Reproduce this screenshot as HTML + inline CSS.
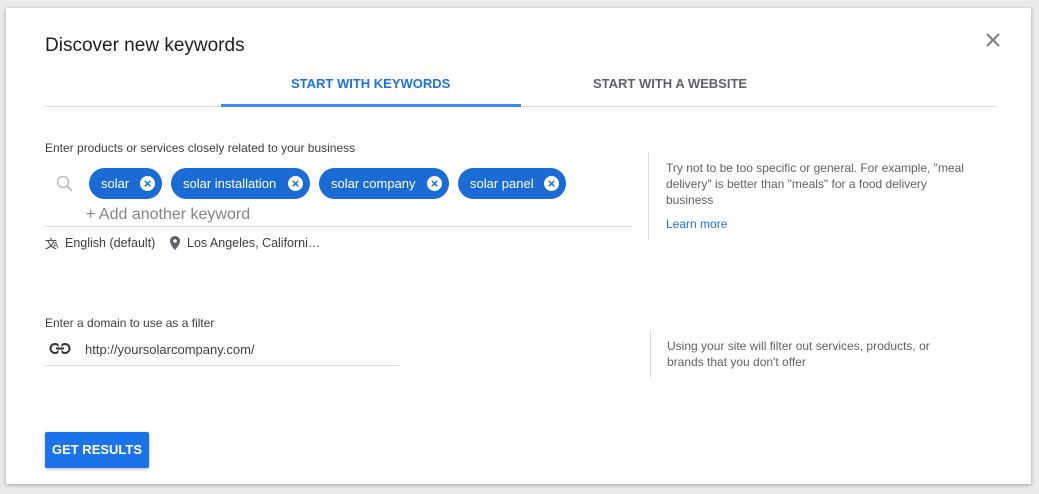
<!DOCTYPE html><html><head><style>
body{margin:0;width:1039px;height:494px;background:#e9eaeb;font-family:"Liberation Sans",Arial,sans-serif;position:relative;overflow:hidden}
.card{position:absolute;left:6px;top:8px;width:1025px;height:476px;background:#fff;box-shadow:0 1px 4px rgba(0,0,0,.3)}
.a{position:absolute;white-space:nowrap}
.chip{position:absolute;top:168px;height:31px;border-radius:16px;background:#1a6bd6;color:#fff;font-size:13px;line-height:31px;padding-left:12px;box-sizing:border-box}
.chip i{position:absolute;right:7px;top:8px;width:15px;height:15px;border-radius:50%;background:#fff;color:#1a6bd6;font-style:normal;font-size:13px;line-height:15px;text-align:center;font-weight:bold}
.s{font-size:12px;color:#3c4043}
</style></head><body><div class="card"></div>
<div class="a" style="left:45px;top:35px;font-size:19px;color:#202124">Discover new keywords</div>
<svg class="a" style="left:985px;top:32px" width="16" height="16"><path d="M2 2L14 14M14 2L2 14" stroke="#808080" stroke-width="2"/></svg>
<div class="a" style="left:291px;top:76px;font-size:13px;font-weight:bold;color:#1a73e8">START WITH KEYWORDS</div>
<div class="a" style="left:593px;top:76px;font-size:13px;font-weight:bold;color:#5f6368">START WITH A WEBSITE</div>
<div class="a" style="left:45px;top:106px;width:952px;height:1px;background:#dadce0"></div>
<div class="a" style="left:221px;top:104px;width:300px;height:3px;background:#4285f4"></div>
<div class="a s" style="left:45px;top:141px">Enter products or services closely related to your business</div>
<svg class="a" style="left:55px;top:174px" width="20" height="20"><circle cx="8" cy="8" r="5.5" fill="none" stroke="#bbb" stroke-width="1.5"/><line x1="12" y1="12" x2="17" y2="17" stroke="#bbb" stroke-width="1.8"/></svg>
<div class="chip" style="left:89px;width:73px">solar<i>×</i></div>
<div class="chip" style="left:171px;width:139px">solar installation<i>×</i></div>
<div class="chip" style="left:319px;width:130px">solar company<i>×</i></div>
<div class="chip" style="left:458px;width:108px">solar panel<i>×</i></div>
<div class="a" style="left:86px;top:206px;font-size:16px;color:#80868b">+ Add another keyword</div>
<div class="a" style="left:45px;top:226px;width:587px;height:1px;background:#dadce0"></div>
<div class="a s" style="left:45px;top:235px;font-size:12px">文</div>
<div class="a s" style="left:53px;top:241px;font-size:8px">A</div>
<div class="a s" style="left:65px;top:236px;font-size:12.5px">English (default)</div>
<svg class="a" style="left:170px;top:236px" width="10" height="14"><path d="M5 0C2.2 0 0 2.2 0 5c0 3.8 5 9 5 9s5-5.2 5-9c0-2.8-2.2-5-5-5zm0 6.8A1.8 1.8 0 1 1 5 3.2a1.8 1.8 0 0 1 0 3.6z" fill="#5f6368"/></svg>
<div class="a s" style="left:187px;top:236px;font-size:12.5px">Los Angeles, Californi…</div>
<div class="a" style="left:648px;top:152px;width:1px;height:88px;background:#dadce0"></div>
<div class="a" style="left:666px;top:160px;width:305px;font-size:12px;color:#5f6368;white-space:normal;line-height:16px">Try not to be too specific or general. For example, "meal delivery" is better than "meals" for a food delivery business</div>
<div class="a" style="left:666px;top:217px;font-size:12px;color:#1a73e8">Learn more</div>
<div class="a s" style="left:45px;top:316px">Enter a domain to use as a filter</div>
<svg class="a" style="left:49px;top:342px" width="24" height="14"><rect x="1.5" y="2" width="9" height="9" rx="4.5" fill="none" stroke="#333" stroke-width="2"/><rect x="11.5" y="2" width="9" height="9" rx="4.5" fill="none" stroke="#333" stroke-width="2"/><rect x="9.5" y="0" width="3" height="14" fill="#fff"/><line x1="7" y1="6.5" x2="15" y2="6.5" stroke="#333" stroke-width="2"/></svg>
<div class="a" style="left:85px;top:342px;font-size:13px;color:#3c4043">http://yoursolarcompany.com/</div>
<div class="a" style="left:45px;top:365px;width:354px;height:1px;background:#dadce0"></div>
<div class="a" style="left:650px;top:330px;width:1px;height:48px;background:#dadce0"></div>
<div class="a" style="left:667px;top:338px;width:300px;font-size:12px;color:#5f6368;white-space:normal;line-height:16px">Using your site will filter out services, products, or brands that you don't offer</div>
<div class="a" style="left:45px;top:432px;width:104px;height:36px;background:#1a73e8;border-radius:2px;box-shadow:0 1px 3px rgba(0,0,0,.3);color:#fff;font-size:13px;font-weight:bold;text-align:center;line-height:36px">GET RESULTS</div>
</body></html>
